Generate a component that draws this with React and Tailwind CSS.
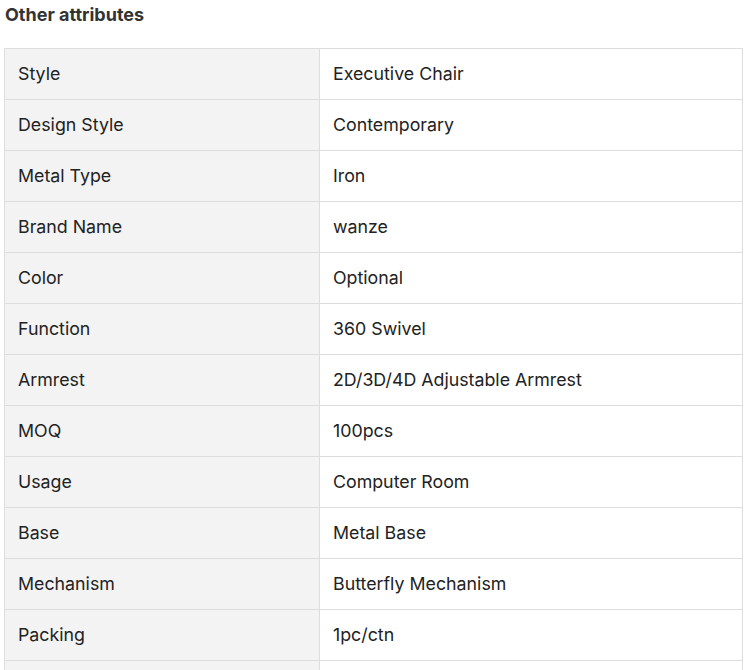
import React from 'react';

const rows = [
  ['Style', 'Executive Chair'],
  ['Design Style', 'Contemporary'],
  ['Metal Type', 'Iron'],
  ['Brand Name', 'wanze'],
  ['Color', 'Optional'],
  ['Function', '360 Swivel'],
  ['Armrest', '2D/3D/4D Adjustable Armrest'],
  ['MOQ', '100pcs'],
  ['Usage', 'Computer Room'],
  ['Base', 'Metal Base'],
  ['Mechanism', 'Butterfly Mechanism'],
  ['Packing', '1pc/ctn'],
  ['', ''],
];

export default function App() {
  return (
    <div className="bg-white w-[751px] h-[670px] overflow-hidden font-['Inter',sans-serif] text-[#222]">
      <h2 className="pl-[5px] pt-[3px] text-[18px] leading-[24px] font-bold text-[#333]">
        Other attributes
      </h2>
      <div className="ml-[4px] mt-[21px] w-[739px] border-l border-t border-[#dddddd]">
        {rows.map(([k, v], i) => (
          <div key={i} className="flex h-[51px] border-b border-[#dddddd]">
            <div className="w-[315px] shrink-0 bg-[#f3f3f3] border-r border-[#dddddd] pl-[13px] flex items-center text-[17.8px]">
              {k}
            </div>
            <div className="flex-1 border-r border-[#dddddd] pl-[13px] flex items-center text-[17.8px]">
              {v}
            </div>
          </div>
        ))}
      </div>
    </div>
  );
}
